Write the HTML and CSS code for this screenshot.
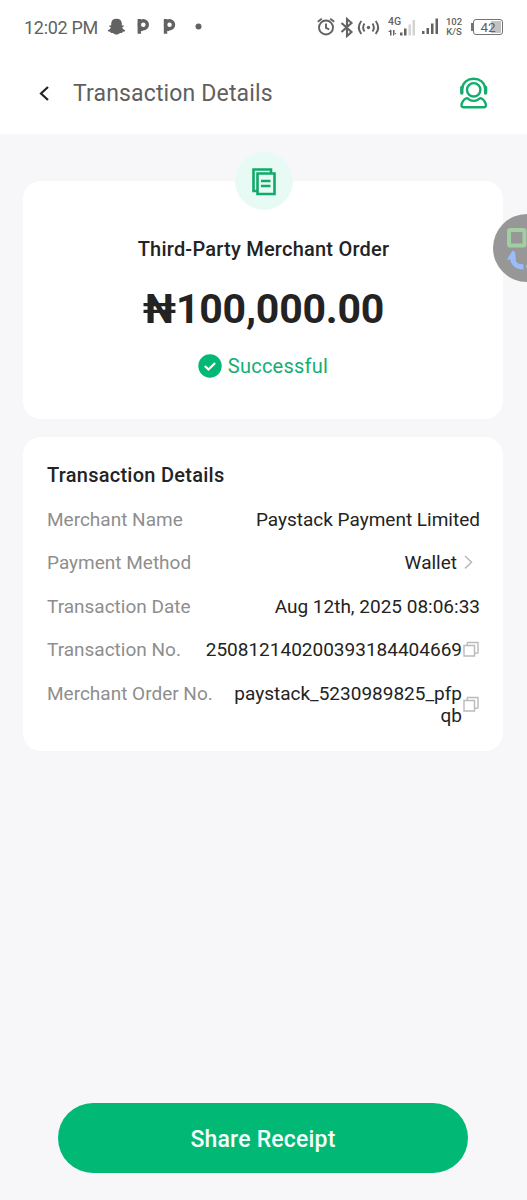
FILE: index.html
```html
<!DOCTYPE html>
<html lang="en">
<head>
<meta charset="utf-8">
<title>Transaction Details</title>
<link rel="stylesheet" href="styles.css">
</head>
<body>
<div class="screen">
  <div class="status-bar">
    <span class="clock">12:02 PM</span>
    <svg class="notices" width="100" height="20" viewBox="0 0 100 20" fill="#626262">
      <path d="M10.500 1.700c3.500 0 5.300 2 5.300 4.900v2l1.500-.3.600.9-1.700 1.200c.5 1.500 1.600 2.300 3 2.800l-.5 1.200-2.100.4-.5 1.300-2-.2c-1 .8-2 1.600-3.600 1.600s-2.600-.8-3.600-1.600l-2 .2-.5-1.300-2.100-.4-.5-1.200c1.400-.5 2.500-1.300 3-2.800L3.100 9.200l.6-.9 1.500.3v-2c0-2.900 1.800-4.900 5.300-4.900z"/>
      <g fill="none" stroke="#626262" stroke-width="3.400"><path d="M33.300 2v14.800M33.300 12.500l3.500-.2"/><circle cx="37.300" cy="7.800" r="4"/><path d="M59.500 2v14.800M59.500 12.500l3.500-.2"/><circle cx="63.500" cy="7.800" r="4"/></g>
      <circle cx="92.500" cy="9.500" r="3"/>
    </svg>
    <svg class="indicators" width="70" height="22" viewBox="0 0 70 22" fill="none" stroke="#626262" stroke-width="1.900">
      <circle cx="11" cy="11.500" r="7"/><path d="M11 7.500v4.300l3.200 1.500M2.800 5.800l4-3M19.200 5.800l-4-3"/>
      <path d="M26.500 7l10 9-4.500 4V3l4.500 4-10 9" stroke-width="2.100"/>
      <path d="M49.500 7.500q-2.700 4 0 8M46.300 5q-5 6.500 0 13M57.500 7.500q2.700 4 0 8M60.700 5q5 6.500 0 13"/><circle cx="53.500" cy="11.500" r="1.700" fill="#626262" stroke="none"/>
    </svg>
    <div class="network">
      <span class="network-type">4G</span>
      <svg width="28" height="17" viewBox="0 0 28 17" fill="#626262">
        <path d="M2 10h1.500v5.500H2zM0 12l3-2.500V12zM5 10h1.500v5.500H5zM6 15.500L8.500 13H6zM12 12.500h2.500v3H12zM16 8.500h2.500v7H16z"/><path fill="#d4d4d4" d="M20.500 4.500H23v11h-2.500zM24.500 0H27v15.500h-2.500z"/>
      </svg>
    </div>
    <svg class="signal" width="17" height="17" viewBox="0 0 17 17" fill="#626262"><path d="M0 13h2.500v3H0zM4.500 10H7v6H4.500zM9 5.500h2.500V16H9zM13.500 .5H16V16h-2.500z"/></svg>
    <div class="speed"><span>102</span><span>K/S</span></div>
    <div class="battery"><span class="battery-nub"></span><span class="battery-level">42</span></div>
  </div>
  <header class="header">
    <svg class="back" width="16" height="20" viewBox="0 0 16 20" fill="none" stroke="#222" stroke-width="2.200"><path d="M12 3L5 9.500l7 6.500"/></svg>
    <h1 class="title">Transaction Details</h1>
    <svg class="support" width="32" height="34" viewBox="0 1 32 34" fill="none" stroke="#14ac6d" stroke-width="2.400">
      <path d="M4.300 12.500C4.600 6.500 9.600 2.800 15.700 2.800s11.100 3.700 11.400 9.700"/>
      <circle cx="15.700" cy="13.800" r="6.700"/>
      <path d="M3.800 11.500v5.500M27.600 11.500v5.500" stroke-width="3.400" stroke-linecap="round"/>
      <path d="M8.200 22.300C5.700 23.200 3.700 26.500 3.500 29c-.1 1.700.7 2.300 2 2.300h20.400c1.300 0 2.100-.6 2-2.300-.2-2.500-2.200-5.800-4.700-6.700-1.200-.4-2 .4-3 1.100a8.200 8.200 0 0 1-9 0c-1-.7-1.800-1.500-3-1.100z"/>
    </svg>
  </header>
  <main class="content">
    <section class="card summary">
      <div class="badge">
        <svg width="26" height="30" viewBox="0 0 26 30" fill="none" stroke="#10ab6a" stroke-width="2.600"><path d="M6 25H2.500V3.500h17.500v4"/><path d="M6.500 7.500h17v20.500h-17z"/><path d="M10 15h9.500M10 20h9.500" stroke-width="2.300"/></svg>
      </div>
      <p class="merchant">Third-Party Merchant Order</p>
      <p class="amount">₦100,000.00</p>
      <p class="status">
        <svg width="24" height="24" viewBox="0 0 24 24"><circle cx="12" cy="12" r="11.700" fill="#02b875"/><path d="M6.800 12l3.700 3.500 6.600-6.500" fill="none" stroke="#fff" stroke-width="2.200"/></svg>
        <span>Successful</span>
      </p>
    </section>
    <section class="card details">
      <h2 class="details-title">Transaction Details</h2>
      <div class="row"><span class="label">Merchant Name</span><span class="value">Paystack Payment Limited</span></div>
      <div class="row"><span class="label">Payment Method</span><span class="value">Wallet</span><svg class="chevron" width="23" height="22" viewBox="0 0 23 22" fill="none" stroke="#b9b9b9" stroke-width="1.500"><path d="M8 4l6.500 6.200L8 16.400"/></svg></div>
      <div class="row"><span class="label">Transaction Date</span><span class="value">Aug 12th, 2025 08:06:33</span></div>
      <div class="row"><span class="label">Transaction No.</span><span class="value">250812140200393184404669</span><svg class="copy" width="18" height="18" viewBox="0 0.5 18 18" fill="none" stroke="#bababa" stroke-width="1.400"><path d="M2 5h10.500v10.500H2zM5 5l.5-3H16v10.500l-3.500.5"/></svg></div>
      <div class="row"><span class="label">Merchant Order No.</span><span class="value">paystack_5230989825_pfp<br>qb</span><svg class="copy" width="18" height="18" viewBox="0 0.5 18 18" fill="none" stroke="#bababa" stroke-width="1.400"><path d="M2 5h10.500v10.500H2zM5 5l.5-3H16v10.500l-3.500.5"/></svg></div>
    </section>
    <button class="share">Share Receipt</button>
  </main>
  <div class="assistive">
    <svg width="34" height="68" viewBox="0 0 34 68" fill="none"><circle cx="34" cy="34" r="34" fill="#979797"/><rect x="16" y="16" width="15.500" height="15.500" rx="1" stroke="#a1cea3" stroke-width="4"/><path d="M19.500 44c.5 5.500 4.500 9 11 8.800" stroke="#98bdf8" stroke-width="5"/><path d="M14 45.500l5.500-9 2.500 1.500 1 8z" fill="#98bdf8"/><path d="M33 51h1v3h-1z" fill="#98bdf8"/></svg>
  </div>
</div>
</body>
</html>
```
FILE: styles.css
```css
* { box-sizing: border-box; }
body { margin: 0; font-family: Roboto, "Noto Sans", sans-serif; background: #f7f7fa; color: #232323; }
h1, h2, p { margin: 0; }
svg { display: block; flex: none; }
.screen { position: relative; width: 527px; height: 1200px; display: flex; flex-direction: column; overflow: hidden; }

.status-bar { height: 53px; flex: none; display: flex; align-items: center; padding-left: 24px; background: #fff; color: #626262; }
.clock { width: 82px; font-size: 18px; letter-spacing: -0.300px; white-space: nowrap; padding-top: 1px; }
.indicators { margin-left: 109px; }
.network { width: 28px; height: 20px; margin-left: 3px; display: grid; }
.network > * { grid-area: 1 / 1; }
.network svg { align-self: end; }
.network-type { font-size: 10.500px; line-height: 9px; font-weight: 500; }
.signal { margin-left: 6px; }
.speed { width: 18px; margin-left: 6px; display: flex; flex-direction: column; align-items: center; font-size: 9.500px; line-height: 9.500px; font-weight: 500; }
.battery { width: 32px; height: 16px; margin-left: 8px; display: flex; align-items: center; }
.battery-nub { width: 2px; height: 8px; background: #737373; }
.battery-level { flex: 1; height: 16px; border: 1.500px solid #737373; border-radius: 3px; background: linear-gradient(90deg, #fff 62%, #c2c2c2 62%) content-box; padding: 1px; font-size: 13.500px; line-height: 12.500px; text-align: center; }

.header { height: 81px; flex: none; display: flex; align-items: center; padding: 0 37px 0 36px; background: #fff; }
.title { flex: 1; margin-left: 21px; font-size: 23px; letter-spacing: 0.150px; font-weight: 400; color: #606060; }

.content { flex: 1; display: flex; flex-direction: column; gap: 18px; padding: 47px 24px 27px 23px; }
.card { background: #fff; border-radius: 18px; }
.summary { height: 238px; display: flex; flex-direction: column; align-items: center; }
.badge { width: 58px; height: 58px; margin-top: -29px; margin-left: 1px; border-radius: 50%; background: #e8faf4; display: grid; place-items: center; }
.merchant { margin-top: 27px; margin-left: 1px; font-size: 20px; letter-spacing: 0.230px; line-height: 24px; font-weight: 500; }
.amount { margin-top: 24px; margin-left: 1px; font-size: 41px; letter-spacing: -0.200px; line-height: 48px; font-weight: 700; }
.status { margin-top: 20px; display: flex; align-items: center; gap: 6px; font-size: 20px; letter-spacing: 0.250px; line-height: 24px; color: #14ae73; }
.status span { padding-top: 1px; }

.details { height: 314px; padding: 26px 23px 0 24px; display: flex; flex-direction: column; }
.details-title { margin-bottom: 22px; font-size: 20px; letter-spacing: 0.260px; line-height: 24px; font-weight: 500; }
.row { display: flex; align-items: center; margin-bottom: 21.400px; font-size: 19px; line-height: 22px; }
.label { align-self: flex-start; color: #8e8e8e; white-space: nowrap; }
.value { margin-left: auto; text-align: right; white-space: nowrap; }

.share { width: 410px; height: 70px; margin: auto auto 0 35px; padding: 2px 0 0; border: 0; border-radius: 35px; background: #02b875; color: #f4fffb; font: 500 23px Roboto, sans-serif; letter-spacing: 0.200px; }
.assistive { position: absolute; right: 0; top: 214px; }
```
